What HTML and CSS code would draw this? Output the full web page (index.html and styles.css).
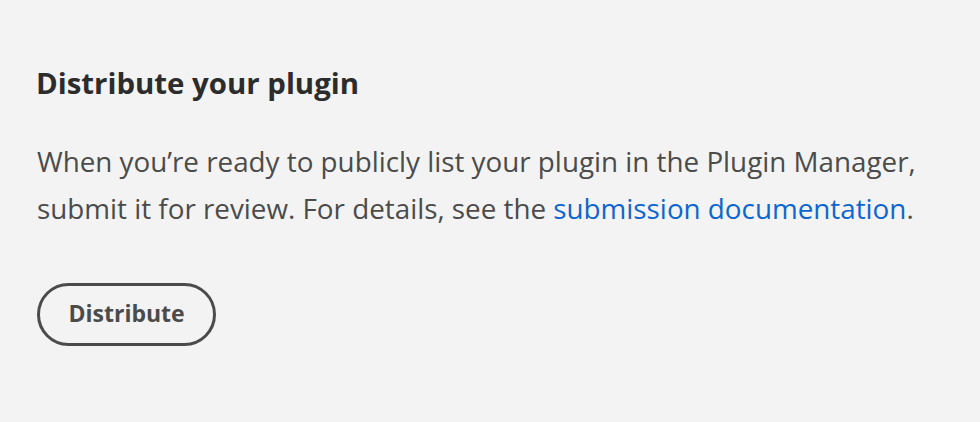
FILE: index.html
```html
<!DOCTYPE html>
<html lang="en">
<head>
<meta charset="utf-8">
<title>Distribute your plugin</title>
<link rel="stylesheet" href="styles.css">
</head>
<body>
<section class="card">
  <h2 class="card-title">Distribute your plugin</h2>
  <p class="card-text">When you’re ready to publicly list your plugin in the Plugin Manager, submit it for review. For details, see the <a class="card-link" href="#">submission documentation</a>.</p>
  <button class="btn-outline" type="button">Distribute</button>
</section>
</body>
</html>
```
FILE: styles.css
```css
html, body {
  margin: 0;
  padding: 0;
  background: #f3f3f3;
}
body {
  font-family: "Open Sans", "Noto Sans", sans-serif;
  color: #4b4b4b;
}
.card {
  display: flex;
  flex-direction: column;
  align-items: flex-start;
  padding: 62.6px 0 0 37px;
}
.card-title {
  margin: 0 0 0 -1px;
  font-size: 29.4px;
  line-height: 40px;
  font-weight: 700;
  color: #2c2c2c;
}
.card-text {
  margin: 35px 0 0 0;
  font-size: 27.8px;
  line-height: 47px;
  color: #4b4b4b;
  width: 900px;
}
.card-link {
  color: #0d66d0;
  text-decoration: none;
}
.btn-outline {
  margin-top: 51px;
  font-family: inherit;
  font-size: 23px;
  font-weight: 700;
  line-height: 55px;
  padding: 0 28.5px 2px;
  border: 3px solid #4b4b4b;
  border-radius: 32px;
  background: transparent;
  color: #4b4b4b;
  cursor: pointer;
}
```
